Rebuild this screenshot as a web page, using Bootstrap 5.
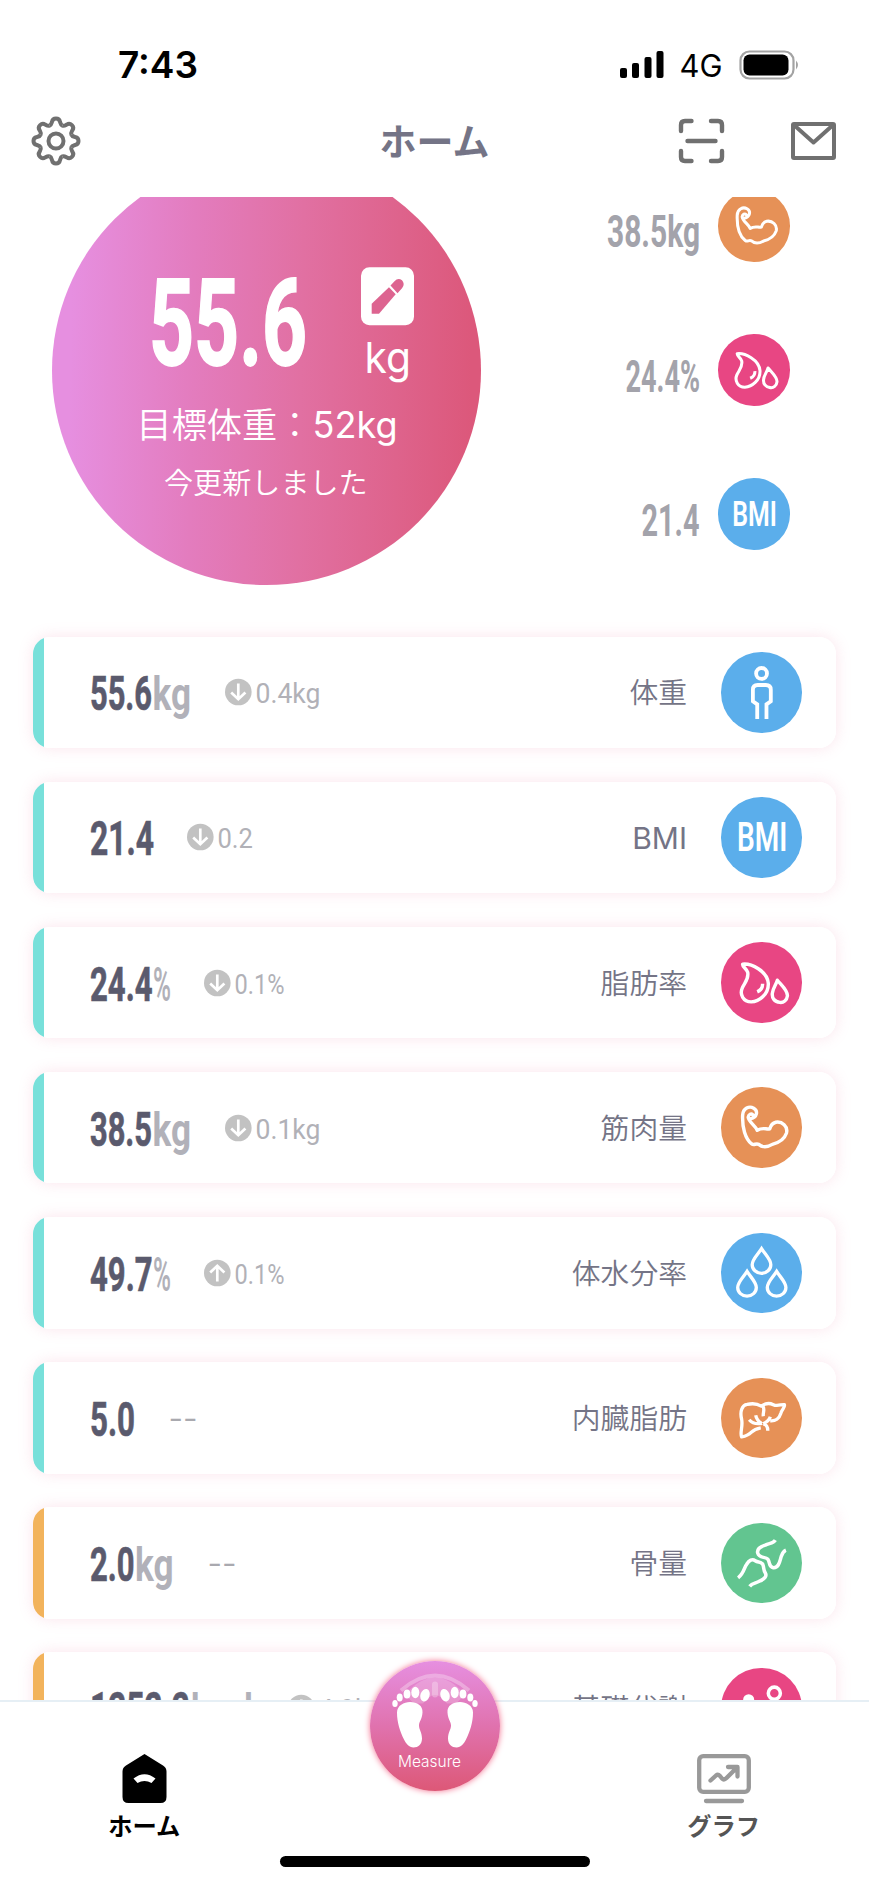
<!DOCTYPE html>
<html lang="ja">
<head>
<meta charset="utf-8">
<meta name="viewport" content="width=device-width, initial-scale=1">
<title>ホーム</title>
<link href="https://cdn.jsdelivr.net/npm/bootstrap@5.3.0/dist/css/bootstrap.min.css" rel="stylesheet">
<style>
  body { font-family: Inter, "Noto Sans CJK JP", sans-serif; background: #fff; color: #747486; }
  .screen { width: 869px; height: 1885px; }
  svg { display: block; flex: none; overflow: visible; }
  svg text { white-space: pre; }
  .din { font-family: Roboto, sans-serif; }
  .statusbar { height: 104px; padding: 26px 70px 0 119px; color: #000; }
  .appbar { height: 93px; padding: 0 33px 20px 31px; }
  .apptitle { font-family: "Noto Sans CJK JP", sans-serif; font-size: 37px; font-weight: 700; line-height: 1; }
  .scan { margin-right: 67px; }
  .scroller { height: 1503px; }
  .hero { height: 439.6px; }
  .dial { width: 429.3px; height: 429.3px; margin: -41.3px 0 0 52px; background: linear-gradient(91deg, #e68fe0 5%, #e37cbe 33%, #e170a2 58%, #de638c 80%, #dc587b 97%); }
  .side { width: 290px; padding-right: 79.5px; margin-top: -6.8px; gap: 72.6px; }
  .side > div { gap: 18.5px; }
  .ball { width: 71.5px; height: 71.5px; }
  .ball svg { width: 100%; height: 100%; }
  .metric .ball { width: 80.5px; height: 80.5px; margin-right: 34.5px; }
  .bg-sky { background: #5baeeb; } .bg-rose { background: #e84683; }
  .bg-amber { background: #e69157; } .bg-mint { background: #62c590; }
  .cards { padding: 0 33px; gap: 33.5px; }
  .metric { height: 111.6px; flex: none; border-radius: 17px; overflow: hidden; background: #fff; }
  .shade { border-radius: 17px; box-shadow: 0 0 15px rgba(235, 120, 160, .2); flex: none; }
  .metric::before { content: ""; width: 11.3px; align-self: stretch; background: #78e0da; margin-right: 45.5px; }
  .metric.low::before { background: #f2b35c; }
  .metric .name { font-size: 28.8px; font-weight: 350; line-height: 1; margin: 3px 34px 0 0; }
  .metric .name.latin { font-size: 30px; font-weight: 400; margin-top: 1px; }
  .delta { margin-left: 34px; }
  .value text:first-child { fill: #5a5a6d; stroke: #5a5a6d; stroke-width: .7px; }
  .tabbar { height: 185px; border-top: 2px solid #e6eff5; background: #fff; }
  .tab { width: 289.6px; padding-top: 52px; gap: 10px; font: 700 24.3px/1 "Noto Sans CJK JP", sans-serif; }
  .tab.graph { color: #555; }
  .tab span { margin-left: -1px; }
  .measure { left: 369.5px; top: 1661px; width: 130px; height: 130px; background: linear-gradient(#e68fe0, #e072ae 50%, #dd5877); box-shadow: 0 0 6px #f4708f; }
  .homebar { left: 280px; top: 1856px; width: 310px; height: 11px; background: #000; border-radius: 6px; }
</style>
</head>
<body>
<svg width="0" height="0" class="position-absolute">
  <defs>
    <g id="muscle" fill="none" stroke="#fff" stroke-width="3.4" stroke-linejoin="round" stroke-linecap="round"><path d="M29.500 31.500C36 30.500 37 23.500 32.500 21C28 18.500 22 21 21.500 28C21 40 24 51.500 30.500 56.500C33 58.500 34.500 55.500 37.500 57C41 60 46 60 51 57C57 55.500 63 52 65 46C67 39 60.500 34 54.500 35C50.500 36 49.500 38 48.500 41.500C45 42.500 42 39.500 36 43C34 38 27.500 35 27 30C27.500 27 30 26 31.500 27.500"/></g>
    <g id="fat" fill="none" stroke="#fff" stroke-width="3.4" stroke-linejoin="round" stroke-linecap="round"><path d="M21.500 22C30 21 46 29 47 41C47.500 52 38 59 30 59.500C22 59.500 18.500 52 21 46C23 41 28 37 26.500 30C25.500 26.500 21 24.500 21.500 22ZM56 38C60 43 66.300 48 66 53.500C65.500 58 62 60.500 58.500 60C53 59.500 50.500 55.500 51 51C51.500 46 54.500 43 56 38Z"/><path d="M41.300 41.500C41.500 45 39.500 48 36 49.500" stroke-linecap="butt"/></g>
    <path id="drop" d="M40.300 15.500C44 21.500 49.500 26 49.500 31.500A9.200 8.500 0 0 1 31 31.500C31 26 36.500 21.500 40.300 15.500Z" fill="none" stroke="#fff" stroke-width="3.300"/>
    <g id="down"><circle cx="13.300" cy="20" r="13.300" fill="#c2c2c2"/><path d="M13.300 11.500V27M6.200 20.500L13.300 27.200L20.400 20.500" fill="none" stroke="#fff" stroke-width="2.700"/></g>
    <path id="tooth" d="M-6.400-15.400C-4.500-16.200-4.500-17.500-4-19.200Q-3.400-22.500 0-22.500Q3.400-22.500 4-19.200C4.500-17.500 4.500-16.200 6.400-15.400"/>
    <g id="foot" fill="#fff"><ellipse cx="26" cy="43" rx="2.700" ry="3.500"/><ellipse cx="30.700" cy="37" rx="3" ry="4"/><ellipse cx="38" cy="33.500" rx="3.400" ry="4.600"/><ellipse cx="46.300" cy="32" rx="4" ry="5.700"/><ellipse cx="56" cy="34.700" rx="4.600" ry="6.400" transform="rotate(18 56 34.700)"/><path d="M28 52C28 45 35 41.500 41 41.500C48 41.500 54 45 53.500 52C53 59 50 61 50 65C50 69 53 72 53 78C53 84 49 87 44.500 87C40 87 37 83 35 79C31 71 28 62 28 52Z"/></g>
  </defs>
</svg>

<div class="screen position-relative overflow-hidden mx-auto">
  <div class="statusbar d-flex justify-content-between">
    <svg width="79" height="54"><text x="-1" y="52" font-size="37.500" font-weight="600" textLength="80" lengthAdjust="spacingAndGlyphs">7:43</text></svg>
    <svg width="180" height="54">
      <g><rect x="1" y="42" width="7" height="10" rx="2"/><rect x="13" y="37" width="7" height="15" rx="2"/><rect x="25.500" y="31" width="7" height="21" rx="2"/><rect x="37.500" y="25" width="7" height="27" rx="2"/></g>
      <text x="60.500" y="51" font-size="31" textLength="43" lengthAdjust="spacingAndGlyphs">4G</text>
      <rect x="121.500" y="25.500" width="53" height="27" rx="9" fill="none" stroke="#a3a3a3" stroke-width="2.200"/>
      <rect x="124.500" y="28.500" width="45" height="21" rx="6"/><path d="M177 34.500Q181 39 177 43.500Z" fill="#a3a3a3"/>
    </svg>
  </div>
  <header class="appbar d-flex align-items-center justify-content-between">
    <svg width="50" height="50" viewBox="-25 -25 50 50" fill="none" stroke="#707070" stroke-width="4"><circle r="7.500"/><use href="#tooth"/><use href="#tooth" transform="rotate(45)"/><use href="#tooth" transform="rotate(90)"/><use href="#tooth" transform="rotate(135)"/><use href="#tooth" transform="rotate(180)"/><use href="#tooth" transform="rotate(225)"/><use href="#tooth" transform="rotate(270)"/><use href="#tooth" transform="rotate(315)"/></svg>
    <div class="apptitle position-absolute start-50 translate-middle-x">ホーム</div>
    <div class="d-flex align-items-center">
      <svg class="scan" width="46" height="46" fill="none" stroke="#707070" stroke-width="4.400" stroke-linecap="round"><path d="M3 13V7Q3 3 7 3H13.500M33 3H40Q44 3 44 7V13M44 33V39Q44 43 40 43H33M13.500 43H7Q3 43 3 39V33M9.500 23H37.500"/></svg>
      <svg width="45" height="38" fill="none" stroke="#707070" stroke-width="4" stroke-linejoin="round"><rect x="2" y="2" width="41" height="34" rx="1"/><path d="M3 3L22.500 20.500L42 3"/></svg>
    </div>
  </header>

  <main class="scroller overflow-hidden">
    <section class="hero d-flex justify-content-between">
      <div class="dial rounded-circle">
        <svg width="429" height="429" viewBox="52 155.700 429 429" fill="#fff">
          <text class="din" x="149" y="365" font-size="120" font-weight="700" textLength="158" lengthAdjust="spacingAndGlyphs" stroke="#fff" stroke-width="1.800">55.6</text>
          <rect x="361" y="267" width="53" height="58" rx="8.500"/>
          <g fill="#dd6490"><path d="M371.700 303.500L389 287L395.700 294L379 313.500H371.700Z"/><path d="M390.500 285.300L394.500 281Q398 277 402 280Q405.500 284 402 288L397.500 293Z"/></g>
          <text x="364.500" y="372.500" font-size="43" textLength="46.500" lengthAdjust="spacingAndGlyphs">kg</text>
          <text x="136.500" y="437.500" font-size="35.200" font-weight="350">目標体重：</text>
          <text x="312.600" y="437.500" font-size="36.500" textLength="85" lengthAdjust="spacingAndGlyphs">52kg</text>
          <text x="164" y="494" font-size="29.100" font-weight="350">今更新しました</text>
        </svg>
      </div>
      <div class="side d-flex flex-column align-items-end">
        <div class="d-flex align-items-center">
          <svg class="din" width="110" height="71" fill="#a3a3ab"><text x="17" y="57" font-size="43.500" font-weight="700" textLength="93" lengthAdjust="spacingAndGlyphs">38.5kg</text></svg>
          <span class="ball bg-amber rounded-circle"><svg viewBox="0 0 80 80"><use href="#muscle"/></svg></span>
        </div>
        <div class="d-flex align-items-center">
          <svg class="din" width="110" height="71" fill="#a3a3ab"><text x="35.500" y="57" font-size="43.500" font-weight="700" textLength="74.500" lengthAdjust="spacingAndGlyphs">24.4%</text></svg>
          <span class="ball bg-rose rounded-circle"><svg viewBox="0 0 80 80"><use href="#fat"/></svg></span>
        </div>
        <div class="d-flex align-items-center">
          <svg class="din" width="110" height="71" fill="#a3a3ab"><text x="51.500" y="57" font-size="43.500" font-weight="700" textLength="58" lengthAdjust="spacingAndGlyphs">21.4</text></svg>
          <span class="ball bg-sky rounded-circle"><svg class="din" viewBox="0 0 80 80" fill="#fff"><text x="16" y="54" font-size="40" font-weight="600" textLength="50" lengthAdjust="spacingAndGlyphs">BMI</text></svg></span>
        </div>
      </div>
    </section>

    <section class="cards d-flex flex-column">
      <div class="shade"><div class="metric d-flex align-items-center">
        <svg class="din value" width="101" height="40" font-size="48.500" font-weight="700"><text y="37.500" textLength="62" lengthAdjust="spacingAndGlyphs">55.6</text><text x="62.500" y="37.500" font-size="47" fill="#b1b1b9" textLength="38.500" lengthAdjust="spacingAndGlyphs">kg</text></svg>
        <svg class="din delta" width="100" height="40" fill="#b1b1b7"><use href="#down"/><text x="30.500" y="30.500" font-size="28.500" textLength="65" lengthAdjust="spacingAndGlyphs">0.4kg</text></svg>
        <span class="name ms-auto">体重</span>
        <span class="ball bg-sky rounded-circle"><svg viewBox="0 0 80 80" fill="none" stroke="#fff" stroke-width="3.800"><circle cx="40.300" cy="21.300" r="5.400"/><path d="M36 66.500V52L31.700 49V37.500Q31.700 32.800 36.500 32.800H44.500Q49.500 32.800 49.500 37.500V49L45.200 52V66.500"/></svg></span>
      </div></div>
      <div class="shade"><div class="metric d-flex align-items-center">
        <svg class="din value" width="63" height="40" font-size="48.500" font-weight="700"><text y="37.500" textLength="64" lengthAdjust="spacingAndGlyphs">21.4</text></svg>
        <svg class="din delta" width="100" height="40" fill="#b1b1b7"><use href="#down"/><text x="30.500" y="30.500" font-size="28.500" textLength="35.500" lengthAdjust="spacingAndGlyphs">0.2</text></svg>
        <span class="name latin ms-auto">BMI</span>
        <span class="ball bg-sky rounded-circle"><svg class="din" viewBox="0 0 80 80" fill="#fff"><text x="16" y="54" font-size="40" font-weight="600" textLength="50" lengthAdjust="spacingAndGlyphs">BMI</text></svg></span>
      </div></div>
      <div class="shade"><div class="metric d-flex align-items-center">
        <svg class="din value" width="80.500" height="40" font-size="48.500" font-weight="700"><text y="37.500" textLength="62.500" lengthAdjust="spacingAndGlyphs">24.4</text><text x="63" y="37.500" fill="#b1b1b9" font-weight="600" textLength="18" lengthAdjust="spacingAndGlyphs">%</text></svg>
        <svg class="din delta" width="100" height="40" fill="#b1b1b7"><use href="#down"/><text x="30.500" y="30.500" font-size="28.500" textLength="50" lengthAdjust="spacingAndGlyphs">0.1%</text></svg>
        <span class="name ms-auto">脂肪率</span>
        <span class="ball bg-rose rounded-circle"><svg viewBox="0 0 80 80"><use href="#fat"/></svg></span>
      </div></div>
      <div class="shade"><div class="metric d-flex align-items-center">
        <svg class="din value" width="101" height="40" font-size="48.500" font-weight="700"><text y="37.500" textLength="62" lengthAdjust="spacingAndGlyphs">38.5</text><text x="62.500" y="37.500" font-size="47" fill="#b1b1b9" textLength="38.500" lengthAdjust="spacingAndGlyphs">kg</text></svg>
        <svg class="din delta" width="100" height="40" fill="#b1b1b7"><use href="#down"/><text x="30.500" y="30.500" font-size="28.500" textLength="65" lengthAdjust="spacingAndGlyphs">0.1kg</text></svg>
        <span class="name ms-auto">筋肉量</span>
        <span class="ball bg-amber rounded-circle"><svg viewBox="0 0 80 80"><use href="#muscle"/></svg></span>
      </div></div>
      <div class="shade"><div class="metric d-flex align-items-center">
        <svg class="din value" width="80.500" height="40" font-size="48.500" font-weight="700"><text y="37.500" textLength="62.500" lengthAdjust="spacingAndGlyphs">49.7</text><text x="63" y="37.500" fill="#b1b1b9" font-weight="600" textLength="18" lengthAdjust="spacingAndGlyphs">%</text></svg>
        <svg class="din delta" width="100" height="40" fill="#b1b1b7"><use href="#down" transform="rotate(180 13.300 20)"/><text x="30.500" y="30.500" font-size="28.500" textLength="50" lengthAdjust="spacingAndGlyphs">0.1%</text></svg>
        <span class="name ms-auto">体水分率</span>
        <span class="ball bg-sky rounded-circle"><svg viewBox="0 0 80 80"><use href="#drop"/><use href="#drop" x="-14.400" y="22.700"/><use href="#drop" x="15" y="22.700"/></svg></span>
      </div></div>
      <div class="shade"><div class="metric d-flex align-items-center">
        <svg class="din value" width="44.500" height="40" font-size="48.500" font-weight="700"><text y="37.500" textLength="45" lengthAdjust="spacingAndGlyphs">5.0</text></svg>
        <svg class="din delta" width="100" height="40" fill="#a9a9af"><text x="2" y="31" font-size="29" letter-spacing="2" textLength="29" lengthAdjust="spacingAndGlyphs">--</text></svg>
        <span class="name ms-auto">内臓脂肪</span>
        <span class="ball bg-amber rounded-circle"><svg viewBox="0 0 80 80" fill="none" stroke="#fff" stroke-width="3.300" stroke-linejoin="round"><path d="M39.500 49.500C36 50 33 51 30 54C27 57 23 58 20.500 58.500C18.500 55 22 48 20.500 41C18.500 33 21 27 26 26.300C31 25 36 25.500 40 28C44 25 48 24.500 52 26.500C56 28.500 60 26 63 26.500C64 29 60.500 31 59.500 35C58 40 54 43 49 42.500M41.500 28C44 31 41.500 34 42 38M28 41.500C31 45 36 46 41 45M34.500 37C35 40 37 43 40.500 45.500M49 38.500C48 42 45 44 42 45.500M42 45.500C45 46 46.500 49 46.500 52.500"/></svg></span>
      </div></div>
      <div class="shade"><div class="metric low d-flex align-items-center">
        <svg class="din value" width="83" height="40" font-size="48.500" font-weight="700"><text y="37.500" textLength="44.500" lengthAdjust="spacingAndGlyphs">2.0</text><text x="45" y="37.500" font-size="47" fill="#b1b1b9" textLength="38.500" lengthAdjust="spacingAndGlyphs">kg</text></svg>
        <svg class="din delta" width="100" height="40" fill="#a9a9af"><text x="2" y="31" font-size="29" letter-spacing="2" textLength="29" lengthAdjust="spacingAndGlyphs">--</text></svg>
        <span class="name ms-auto">骨量</span>
        <span class="ball bg-mint rounded-circle"><svg viewBox="0 0 80 80" fill="none" stroke="#fff" stroke-width="3.500"><path d="M54 17C52 20.500 48 20 44 22C39 23.500 35.500 26 36.500 30C38 35.500 44 33 46.500 36C49 39 47 43.500 52 44.500C58 45 58.500 37 60 33C61 30 62 28 64.500 27M17 54.500C23 50 23 44 25.500 41C28 37 31 35.500 34 37.500C37 39.500 39 38 41.500 41C43 45 42 47 44 49.500C46 53 43 55.500 39 57.500C35 60 31 59.500 28.500 63"/></svg></span>
      </div></div>
      <div class="shade"><div class="metric low d-flex align-items-center">
        <svg class="din value" width="164" height="40" font-size="48.500" font-weight="700"><text y="37.500" textLength="100" lengthAdjust="spacingAndGlyphs">1252.2</text><text x="101" y="38.500" font-size="46" fill="#b1b1b9" textLength="62" lengthAdjust="spacingAndGlyphs">kcal</text></svg>
        <svg class="din delta" width="120" height="40" fill="#b1b1b7"><use href="#down"/><text x="30.500" y="30.500" font-size="28.500" textLength="84" lengthAdjust="spacingAndGlyphs">4.9kcal</text></svg>
        <span class="name ms-auto">基礎代謝</span>
        <span class="ball bg-rose rounded-circle"><svg viewBox="0 0 80 80"><circle cx="53" cy="25" r="6" fill="none" stroke="#fff" stroke-width="3.500"/><circle cx="27.500" cy="31.500" r="5.500" fill="#fff"/></svg></span>
      </div></div>
    </section>
  </main>

  <nav class="tabbar position-relative d-flex justify-content-between">
    <div class="tab d-flex flex-column align-items-center text-black">
      <svg width="45" height="49"><path d="M22.500 0L41 11.500Q44.500 13.500 44.500 17.500V43Q44.500 49 38.500 49H6.500Q.5 49 .5 43V17.500Q.5 13.500 4 11.500Z"/><path d="M11.500 24.500Q22.500 16 33.500 24.500L29.500 29Q22.500 25 15.500 29Z" fill="#fff"/></svg>
      <span>ホーム</span>
    </div>
    <div class="tab graph d-flex flex-column align-items-center">
      <svg width="54" height="49" fill="none" stroke="#999" stroke-width="4.300" stroke-linecap="round" stroke-linejoin="round"><rect x="2.200" y="2.200" width="49.600" height="35.600" rx="4"/><path d="M9 47H45M13.500 26.500L19 21.500Q21 20 23 22L25 24.500Q27 26.500 29.500 24L39.500 14M31 13H40.500V22.500"/></svg>
      <span>グラフ</span>
    </div>
  </nav>
  <div class="measure position-absolute rounded-circle">
    <svg width="130" height="130" viewBox="1 .5 130 130">
      <path d="M36 34Q66 0 96 34L87 43H78Q66 26 54 43H45Z" fill="#fff" opacity=".2"/>
      <path d="M32 30Q66 0 100 30" fill="none" stroke="#fff" stroke-width="4" opacity=".3"/>
      <path d="M66 24V34" stroke="#fff" stroke-width="6" stroke-linecap="round" opacity=".28"/>
      <use href="#foot"/><use href="#foot" transform="translate(132) scale(-1 1)"/>
      <text x="29" y="106" font-size="16" font-weight="300" fill="#fff" textLength="63" lengthAdjust="spacingAndGlyphs">Measure</text>
    </svg>
  </div>
  <div class="homebar position-absolute"></div>
</div>
<script src="https://cdn.jsdelivr.net/npm/bootstrap@5.3.0/dist/js/bootstrap.bundle.min.js"></script>
</body>
</html>
